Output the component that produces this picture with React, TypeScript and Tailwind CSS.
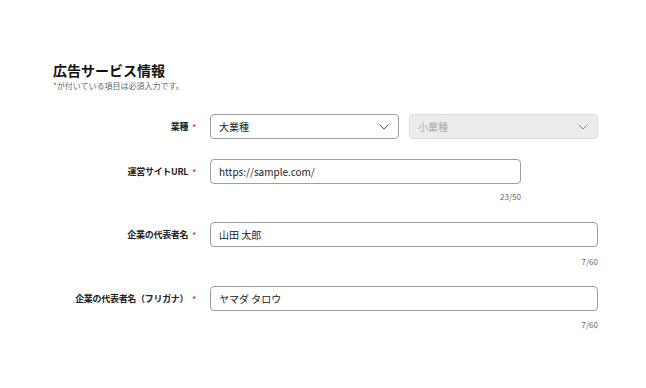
import React from "react";

const Chevron = ({ color }: { color: string }) => (
  <svg width="10" height="6" viewBox="0 0 10 6" fill="none">
    <polyline points="1,1 5,5 9,1" stroke={color} strokeWidth="1" strokeLinecap="round" strokeLinejoin="round" />
  </svg>
);

const Label = ({ text }: { text: string }) => (
  <div className="w-[143px] h-[25px] shrink-0 flex items-center justify-end text-[9px] tracking-[-0.3px] font-bold text-[#222]">
    <span>{text}</span>
    <span className="ml-[4px] text-[#e53935] text-[8px] leading-none">*</span>
  </div>
);

export default function App() {
  return (
    <div
      className="w-[646px] h-[388px] bg-white pl-[53px] pt-[60px]"
      style={{ fontFamily: '"Noto Sans CJK JP", "Noto Sans", sans-serif' }}
    >
      <div className="w-[545px]">
        <h1 className="text-[14px] leading-[20px] font-bold text-[#111]">広告サービス情報</h1>
        <p className="text-[8px] leading-[12px] text-[#666]">*が付いている項目は必須入力です。</p>

        {/* Row 1 */}
        <div className="mt-[22px] flex items-start gap-[14px]">
          <Label text="業種" />
          <div className="flex-1 flex gap-[10px]">
            <div className="flex-1 h-[25px] border border-[#9e9e9e] rounded-[4px] flex items-center justify-between pl-[8px] pr-[9px] text-[10px] text-[#222]">
              <span>大業種</span>
              <Chevron color="#555" />
            </div>
            <div className="flex-1 h-[25px] border border-[#dcdcdc] bg-[#ececec] rounded-[4px] flex items-center justify-between pl-[8px] pr-[9px] text-[10px] text-[#aaa]">
              <span>小業種</span>
              <Chevron color="#888" />
            </div>
          </div>
        </div>

        {/* Row 2 */}
        <div className="mt-[20px] flex items-start gap-[14px]">
          <Label text="運営サイトURL" />
          <div className="flex-1">
            <div className="w-[311px]">
              <div className="h-[25px] border border-[#9e9e9e] rounded-[4px] flex items-center pl-[8px] text-[10px] text-[#222]">
                https://sample.com/
              </div>
              <div className="mt-[7px] text-right text-[8px] leading-[12px] text-[#666]">23/50</div>
            </div>
          </div>
        </div>

        {/* Row 3 */}
        <div className="mt-[19px] flex items-start gap-[14px]">
          <Label text="企業の代表者名" />
          <div className="flex-1">
            <div className="h-[25px] border border-[#9e9e9e] rounded-[4px] flex items-center pl-[8px] text-[10px] text-[#222]">
              山田 太郎
            </div>
            <div className="mt-[9px] text-right text-[8px] leading-[12px] text-[#666]">7/60</div>
          </div>
        </div>

        {/* Row 4 */}
        <div className="mt-[18px] flex items-start gap-[14px]">
          <Label text="企業の代表者名（フリガナ）" />
          <div className="flex-1">
            <div className="h-[25px] border border-[#9e9e9e] rounded-[4px] flex items-center pl-[8px] text-[10px] text-[#222]">
              ヤマダ タロウ
            </div>
            <div className="mt-[8px] text-right text-[8px] leading-[12px] text-[#666]">7/60</div>
          </div>
        </div>
      </div>
    </div>
  );
}
